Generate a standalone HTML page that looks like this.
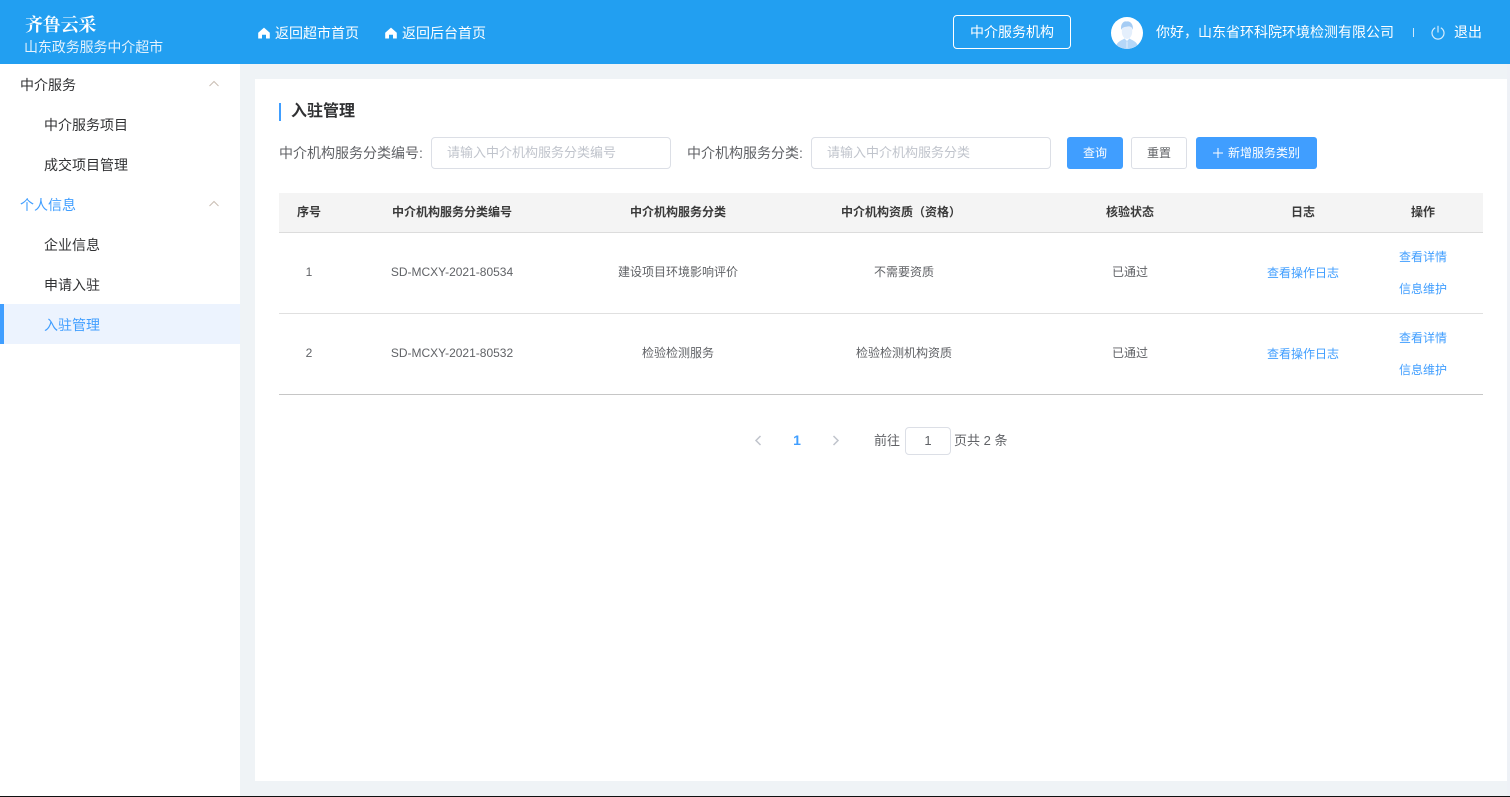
<!DOCTYPE html>
<html lang="zh-CN"><head><meta charset="utf-8"><title>入驻管理</title>
<style>
*{box-sizing:border-box;margin:0;padding:0}
html,body{width:1510px;height:797px;overflow:hidden;background:#fff}
body{font-family:"Liberation Sans","Noto Sans CJK SC",sans-serif;position:relative;color:#606266}
.a{position:absolute;white-space:nowrap}
.c{position:absolute;white-space:nowrap;text-align:center;transform:translateX(-50%)}
.hd{left:0;top:0;width:1510px;height:64px;background:#229ff1}
.w{color:#fff;font-size:14px;line-height:20px}
.m{font-size:14px;line-height:20px;color:#303133}
.b{color:#409eff}
.th{font-size:12px;font-weight:bold;color:#3a3a3a;line-height:18px}
.td{font-size:12px;color:#606266;line-height:18px}
.lk{font-size:12px;color:#409eff;line-height:18px}
.inp{height:32px;width:240px;border:1px solid #dcdfe6;border-radius:4px;background:#fff;top:137px}
.ph{font-size:13px;color:#c0c4cc;line-height:18px;top:144px}
.lab{font-size:14px;color:#606266;line-height:20px;top:143px}
.btn{top:137px;height:32px;border-radius:3px;font-size:12px;line-height:32px;text-align:center}
</style></head><body>
<div class="a" style="left:0;top:64px;width:1510px;height:733px;background:#eff3f6"></div>
<div class="a hd"></div>
<div class="a" style="left:25px;top:13px;font-family:'Liberation Serif','Noto Serif CJK SC',serif;font-size:18px;font-weight:bold;color:#fff;line-height:24px;letter-spacing:-.2px">齐鲁云采</div>
<div class="a" style="left:24px;top:38px;font-size:14px;color:#e4f2fd;line-height:18px;letter-spacing:-.1px">山东政务服务中介超市</div>

<svg class="a" style="left:258px;top:27px" width="12" height="12" viewBox="0 0 12 12"><path d="M6 .6 11.800 5.800V11.500H8V7.800H4V11.500H.2V5.800Z" fill="#fff"/></svg>
<div class="a w" style="left:275px;top:23px">返回超市首页</div>
<svg class="a" style="left:385px;top:27px" width="12" height="12" viewBox="0 0 12 12"><path d="M6 .6 11.800 5.800V11.500H8V7.800H4V11.500H.2V5.800Z" fill="#fff"/></svg>
<div class="a w" style="left:402px;top:23px">返回后台首页</div>

<div class="a w" style="left:953px;top:15px;width:118px;height:34px;border:1px solid #fff;border-radius:4px;text-align:center;line-height:32px">中介服务机构</div>

<svg class="a" style="left:1111px;top:17px" width="32" height="32" viewBox="0 0 32 32">
<circle cx="16" cy="16" r="16" fill="#fff"/>
<path d="M5.500 28C7 24 11.500 23 13.500 21.500L16 24 18.500 21.500C20.500 23 25 24 26.500 28A16 16 0 0 1 5.500 28Z" fill="#b5d7f8"/>
<path d="M15.500 24.500H16.500V31H15.500Z" fill="#e4effc"/>
<ellipse cx="16" cy="14.500" rx="5.200" ry="7.500" fill="#e4effc"/>
<path d="M10.300 13C9 7.500 12.500 3.500 15.500 4.500 19.500 3.500 22.800 8 21.700 13 21 10 19.500 9 16.500 9.500 13 10 11 10.500 10.300 13Z" fill="#a5ccf4"/>
</svg>
<div class="a w" style="left:1156px;top:22px">你好，山东省环科院环境检测有限公司</div>
<div class="a" style="left:1413px;top:28px;width:1px;height:9px;background:#cfe8fb"></div>
<svg class="a" style="left:1431px;top:25px" width="14" height="15" viewBox="0 0 14 15" fill="none" stroke="#d6ecfc" stroke-width="1.200"><path d="M4.200 2.800A6 6 0 1 0 9.800 2.800"/><path d="M7 .8V7.500"/></svg>
<div class="a w" style="left:1454px;top:22px">退出</div>

<!-- sidebar -->
<div class="a" style="left:0;top:64px;width:240px;height:733px;background:#fff"></div>
<div class="a m" style="left:20px;top:75px">中介服务</div>
<svg class="a" style="left:208px;top:80px" width="12" height="7" viewBox="0 0 12 7" fill="none" stroke="#c9bdb3" stroke-width="1"><path d="M1.500 6 6 1.500 10.500 6"/></svg>
<div class="a m" style="left:44px;top:115px">中介服务项目</div>
<div class="a m" style="left:44px;top:155px">成交项目管理</div>
<div class="a m b" style="left:20px;top:195px;color:#409eff">个人信息</div>
<svg class="a" style="left:208px;top:200px" width="12" height="7" viewBox="0 0 12 7" fill="none" stroke="#c9bdb3" stroke-width="1"><path d="M1.500 6 6 1.500 10.500 6"/></svg>
<div class="a m" style="left:44px;top:235px">企业信息</div>
<div class="a m" style="left:44px;top:275px">申请入驻</div>
<div class="a" style="left:0;top:304px;width:240px;height:40px;background:#ecf3fe;border-left:4px solid #409eff"></div>
<div class="a m" style="left:44px;top:315px;color:#409eff">入驻管理</div>

<!-- card -->
<div class="a" style="left:255px;top:79px;width:1252px;height:702px;background:#fff"></div>
<div class="a" style="left:279px;top:103px;width:2px;height:18px;background:#409eff"></div>
<div class="a" style="left:291px;top:101px;font-size:16px;font-weight:bold;color:#303133;line-height:22px">入驻管理</div>

<div class="a lab" style="left:279px">中介机构服务分类编号:</div>
<div class="a inp" style="left:431px"></div>
<div class="a ph" style="left:447px">请输入中介机构服务分类编号</div>
<div class="a lab" style="left:687px">中介机构服务分类:</div>
<div class="a inp" style="left:811px"></div>
<div class="a ph" style="left:827px">请输入中介机构服务分类</div>

<div class="a btn" style="left:1067px;width:56px;background:#409eff;color:#fff">查询</div>
<div class="a btn" style="left:1131px;width:56px;background:#fff;border:1px solid #dcdfe6;line-height:30px;color:#606266">重置</div>
<div class="a btn" style="left:1196px;width:121px;background:#409eff;color:#fff;text-align:left;padding-left:32px">新增服务类别</div>
<svg class="a" style="left:1213px;top:148px" width="10" height="10" viewBox="0 0 10 10" stroke="#fff" stroke-width="1"><path d="M5 0V10M0 5H10"/></svg>

<!-- table -->
<div class="a" style="left:279px;top:193px;width:1204px;height:40px;background:#f4f4f4;border-bottom:1px solid #dcdcdc"></div>
<div class="c th" style="left:309px;top:203px">序号</div>
<div class="c th" style="left:452px;top:203px">中介机构服务分类编号</div>
<div class="c th" style="left:678px;top:203px">中介机构服务分类</div>
<div class="c th" style="left:901px;top:203px">中介机构资质（资格）</div>
<div class="c th" style="left:1130px;top:203px">核验状态</div>
<div class="c th" style="left:1303px;top:203px">日志</div>
<div class="c th" style="left:1423px;top:203px">操作</div>

<div class="c td" style="left:309px;top:263px">1</div>
<div class="c td" style="left:452px;top:263px">SD-MCXY-2021-80534</div>
<div class="c td" style="left:678px;top:263px">建设项目环境影响评价</div>
<div class="c td" style="left:904px;top:263px">不需要资质</div>
<div class="c td" style="left:1130px;top:263px">已通过</div>
<div class="c lk" style="left:1303px;top:264px">查看操作日志</div>
<div class="c lk" style="left:1423px;top:248px">查看详情</div>
<div class="c lk" style="left:1423px;top:280px">信息维护</div>
<div class="a" style="left:279px;top:313px;width:1204px;height:1px;background:#e0e0e0"></div>

<div class="c td" style="left:309px;top:344px">2</div>
<div class="c td" style="left:452px;top:344px">SD-MCXY-2021-80532</div>
<div class="c td" style="left:678px;top:344px">检验检测服务</div>
<div class="c td" style="left:904px;top:344px">检验检测机构资质</div>
<div class="c td" style="left:1130px;top:344px">已通过</div>
<div class="c lk" style="left:1303px;top:345px">查看操作日志</div>
<div class="c lk" style="left:1423px;top:329px">查看详情</div>
<div class="c lk" style="left:1423px;top:361px">信息维护</div>
<div class="a" style="left:279px;top:394px;width:1204px;height:1px;background:#c6c6c6"></div>

<!-- pagination -->
<svg class="a" style="left:754px;top:435px" width="8" height="11" viewBox="0 0 8 11" fill="none" stroke="#c0c4cc" stroke-width="1.500"><path d="M6.500 1 2 5.500 6.500 10"/></svg>
<div class="c" style="left:797px;top:431px;font-size:14px;font-weight:bold;color:#409eff;line-height:18px">1</div>
<svg class="a" style="left:832px;top:435px" width="8" height="11" viewBox="0 0 8 11" fill="none" stroke="#c0c4cc" stroke-width="1.500"><path d="M1.500 1 6 5.500 1.500 10"/></svg>
<div class="a" style="left:874px;top:432px;font-size:13px;color:#606266;line-height:18px">前往</div>
<div class="a" style="left:905px;top:427px;width:46px;height:28px;border:1px solid #dcdfe6;border-radius:4px;font-size:13px;color:#606266;text-align:center;line-height:26px">1</div>
<div class="a" style="left:954px;top:432px;font-size:13px;color:#606266;line-height:18px">页共 2 条</div>

<!-- right strip and bottom line -->
<div class="a" style="left:1507px;top:64px;width:3px;height:732px;background:#eef1f6"></div>
<div class="a" style="left:0;top:796px;width:1510px;height:1px;background:#111"></div>
</body></html>
